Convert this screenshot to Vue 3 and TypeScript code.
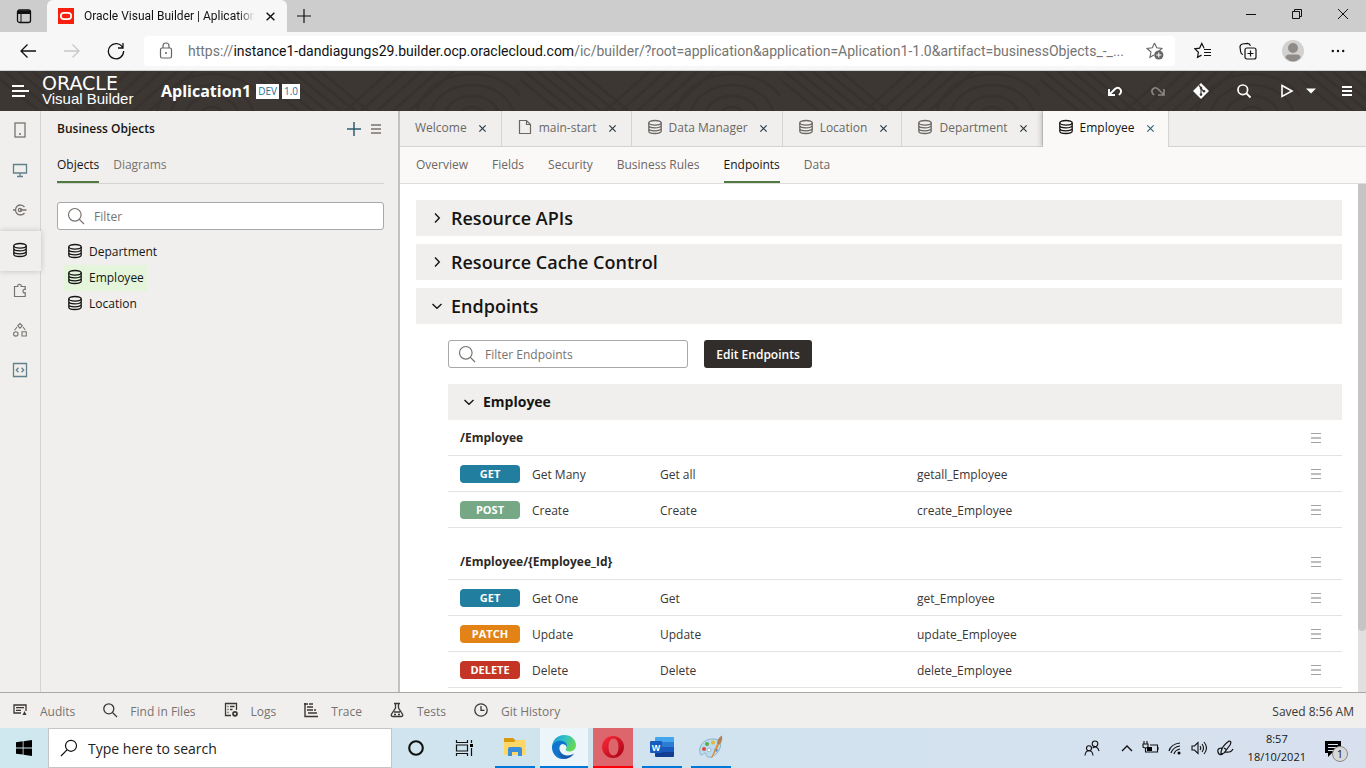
<script setup lang="ts">
import { ref } from 'vue'

interface EditorTab { label: string; icon: string }
interface Endpoint { method: string; name: string; summary: string; id: string }
interface Group { path: string; rows: Endpoint[] }

const editorTabs: EditorTab[] = [
  { label: 'Welcome', icon: '' },
  { label: 'main-start', icon: 'file' },
  { label: 'Data Manager', icon: 'db' },
  { label: 'Location', icon: 'db' },
  { label: 'Department', icon: 'db' },
  { label: 'Employee', icon: 'db' },
]
const activeEditor = ref('Employee')
const subTabs = ['Overview', 'Fields', 'Security', 'Business Rules', 'Endpoints', 'Data']
const activeSub = ref('Endpoints')
const rail = [
  { id: 'mobile', label: 'Mobile Applications' },
  { id: 'desktop', label: 'Web Applications' },
  { id: 'service', label: 'Service Connections' },
  { id: 'db', label: 'Business Objects' },
  { id: 'puzzle', label: 'Components' },
  { id: 'process', label: 'Processes' },
  { id: 'source', label: 'Source View' },
]
const activeRail = ref('db')
const objects = ['Department', 'Employee', 'Location']
const selected = ref('Employee')
const filter = ref('')
const endpointFilter = ref('')
const groups: Group[] = [
  {
    path: '/Employee',
    rows: [
      { method: 'GET', name: 'Get Many', summary: 'Get all', id: 'getall_Employee' },
      { method: 'POST', name: 'Create', summary: 'Create', id: 'create_Employee' },
    ],
  },
  {
    path: '/Employee/{Employee_Id}',
    rows: [
      { method: 'GET', name: 'Get One', summary: 'Get', id: 'get_Employee' },
      { method: 'PATCH', name: 'Update', summary: 'Update', id: 'update_Employee' },
      { method: 'DELETE', name: 'Delete', summary: 'Delete', id: 'delete_Employee' },
    ],
  },
]
const footer = [
  { label: 'Audits', icon: 'audits' },
  { label: 'Find in Files', icon: 'find' },
  { label: 'Logs', icon: 'logs' },
  { label: 'Trace', icon: 'trace' },
  { label: 'Tests', icon: 'tests' },
  { label: 'Git History', icon: 'clock' },
]
</script>

<template>
  <div class="screen">
    <svg class="defs" width="0" height="0" aria-hidden="true">
      <symbol id="db" viewBox="0 0 16 16"><g fill="none" stroke="currentColor" stroke-width="1.3"><ellipse cx="8" cy="3.8" rx="6.2" ry="2.3" /><path d="M1.8 3.8v8.4c0 1.3 2.8 2.3 6.2 2.3s6.2-1 6.2-2.3V3.8M1.8 6.6c0 1.3 2.8 2.3 6.2 2.3s6.2-1 6.2-2.3M1.8 9.5c0 1.3 2.8 2.3 6.2 2.3s6.2-1 6.2-2.3" /></g></symbol>
      <symbol id="file" viewBox="0 0 16 16"><path d="M2.5 1.5h7l4 4v9h-11zM9.5 1.5v4h4" fill="none" stroke="currentColor" stroke-width="1.2" /></symbol>
      <symbol id="mobile" viewBox="0 0 16 16"><rect x="3" y="1" width="10" height="14" fill="none" stroke="currentColor" stroke-width="1.3" /><path d="M7 12h2" stroke="currentColor" stroke-width="1.3" /></symbol>
      <symbol id="desktop" viewBox="0 0 16 16"><path d="M1.500 2.500h13v8.500h-13zM8 11v3.500M5 14.500h6" fill="none" stroke="currentColor" stroke-width="1.3" /></symbol>
      <symbol id="service" viewBox="0 0 16 16"><path d="M12.500 5A5 5 0 1 0 12.500 11M1 8h2M8 8h6.500" fill="none" stroke="currentColor" stroke-width="1.3" /><circle cx="8" cy="8" r="1.600" fill="none" stroke="currentColor" stroke-width="1.3" /></symbol>
      <symbol id="puzzle" viewBox="0 0 16 16"><path d="M2.500 4.500h3.300c-.8-3 4.200-3 3.400 0h4V7.500c-3-.8-3 4 0 3.200v3.800H2.500z" fill="none" stroke="currentColor" stroke-width="1.2" /></symbol>
      <symbol id="process" viewBox="0 0 16 16"><path d="M8 1.500l2.300 2.300L8 6.100 5.700 3.800zM10 9.700h4.300V14H10zM5 5L2.600 8.300M11 5l2.300 3" fill="none" stroke="currentColor" stroke-width="1.1" /><circle cx="3.800" cy="11.900" r="2.200" fill="none" stroke="currentColor" stroke-width="1.100" /></symbol>
      <symbol id="source" viewBox="0 0 16 16"><path d="M1.500 1.500h13v13h-13zM6.500 5.800L4.300 8l2.200 2.200M9.500 5.800L11.700 8l-2.200 2.200" fill="none" stroke="currentColor" stroke-width="1.300" /></symbol>
      <symbol id="search" viewBox="0 0 18 18"><g fill="none" stroke="currentColor" stroke-width="1.2"><circle cx="7.800" cy="7.800" r="6.300" /><path d="M12.400 12.400L17 17" /></g></symbol>
      <symbol id="find" viewBox="0 0 16 16"><g fill="none" stroke="currentColor" stroke-width="1.300"><circle cx="6.800" cy="6.800" r="5" /><path d="M10.500 10.500L15 15" /></g></symbol>
      <symbol id="audits" viewBox="0 0 16 16"><path d="M14 9V3H2v8h7M4 5.600h8M4 8.300h5" fill="none" stroke="currentColor" stroke-width="1.300" /><path d="M12.500 9l2 4h-4z" fill="currentColor" /></symbol>
      <symbol id="logs" viewBox="0 0 16 16"><path d="M13.500 8V1.500h-11v12H8M4.500 4.500h1M7 4.500h4.500M4.500 7.500h1M7 7.500h2.500M4.500 10.500h1" fill="none" stroke="currentColor" stroke-width="1.300" /><circle cx="12" cy="11.800" r="2" fill="none" stroke="currentColor" stroke-width="1.700" /></symbol>
      <symbol id="trace" viewBox="0 0 16 16"><path d="M2 1v13.500h13M1 2h4M4 5h6M4 8h6M11 8h2M5 11h9M6 2h4" fill="none" stroke="currentColor" stroke-width="1.400" /></symbol>
      <symbol id="tests" viewBox="0 0 16 16"><path d="M5 1.500h6M6.500 1.500v4.500L2.300 12.500Q2 14.500 4 14.500h8q2 0 1.700-2L9.500 6V1.500M5 10h6M5 12.500h2M9 12.500h2" fill="none" stroke="currentColor" stroke-width="1.300" /></symbol>
      <symbol id="clock" viewBox="0 0 16 16"><g fill="none" stroke="currentColor" stroke-width="1.300"><circle cx="8" cy="8" r="6.200" /><path d="M8 4v4.300h3.500" /></g></symbol>
      <symbol id="menu" viewBox="0 0 12 12"><path d="M1 1.500h10M1 10.500h10" stroke="currentColor" stroke-width="1" /><path d="M1 6h10" stroke="currentColor" stroke-width="1.400" /></symbol>
      <symbol id="x" viewBox="0 0 10 10"><path d="M1.500 1.500l7 7M8.500 1.500l-7 7" stroke="currentColor" stroke-width="1.300" /></symbol>
      <symbol id="chev" viewBox="0 0 12 12"><path d="M1.500 4L6 8.300 10.500 4" fill="none" stroke="currentColor" stroke-width="1.400" /></symbol>
    </svg>

    <!-- Browser title bar -->
    <header class="titlebar">
      <button class="tab-actions" aria-label="Tab actions">
        <svg width="16" height="16" viewBox="0 0 16 16"><rect x="1.500" y="2" width="13" height="12.500" rx="2" fill="none" stroke="#111" stroke-width="1.300" /><path d="M2 3h12v2.500H2zM5 5v9" fill="#111" stroke="#111" /></svg>
      </button>
      <div class="browser-tab">
        <svg width="16" height="16" viewBox="0 0 16 16"><path fill="#f81f0c" d="M0 0h16v16H0z" /><rect x="2.800" y="4.800" width="10.400" height="6.400" rx="3.200" fill="none" stroke="#fff" stroke-width="1.700" /></svg>
        <span class="tab-title">Oracle Visual Builder | Aplication1</span>
        <button aria-label="Close tab"><svg width="11" height="11"><use href="#x" /></svg></button>
      </div>
      <button class="new-tab" aria-label="New tab"><svg width="16" height="16" viewBox="0 0 16 16"><path d="M8 1v14M1 8h14" stroke="#111" stroke-width="1.200" /></svg></button>
      <div class="window-controls">
        <button aria-label="Minimize"><svg width="12" height="12" viewBox="0 0 12 12"><path d="M1 6.500h10" stroke="#111" /></svg></button>
        <button aria-label="Restore"><svg width="12" height="12" viewBox="0 0 12 12"><path d="M1.500 3.500h7v7h-7zM3.500 3V1.500h7v7H9" fill="none" stroke="#111" /></svg></button>
        <button aria-label="Close"><svg width="12" height="12" viewBox="0 0 12 12"><path d="M1 1l10 10M11 1L1 11" stroke="#111" /></svg></button>
      </div>
    </header>

    <!-- Browser toolbar -->
    <div class="toolbar">
      <button aria-label="Back"><svg width="18" height="16" viewBox="0 0 18 16"><path d="M17 8H2M8.500 1.500L2 8l6.500 6.500" fill="none" stroke="#111" stroke-width="1.300" /></svg></button>
      <button aria-label="Forward"><svg width="18" height="16" viewBox="0 0 18 16"><path d="M1 8h15M9.500 1.500L16 8l-6.500 6.500" fill="none" stroke="#c8c8c8" stroke-width="1.300" /></svg></button>
      <button aria-label="Reload"><svg width="18" height="18" viewBox="0 0 18 18"><path d="M15.600 5.500A7.600 7.600 0 1 0 16.600 9M16 1v5h-5" fill="none" stroke="#111" stroke-width="1.300" /></svg></button>
      <div class="address">
        <svg width="14" height="18" viewBox="0 0 14 18"><rect x="1.500" y="6" width="11" height="10" rx="1.500" fill="none" stroke="#666" stroke-width="1.200" /><path d="M4 6V4q0-3 3-3t3 3v2" fill="none" stroke="#666" stroke-width="1.200" /><circle cx="7" cy="11" r="1" fill="#666" /></svg>
        <span class="url">https://<b>instance1-dandiagungs29.builder.ocp.oraclecloud.com</b>/ic/builder/?root=application&amp;application=Aplication1-1.0&amp;artifact=businessObjects_-_...</span>
        <button aria-label="Add to favorites"><svg width="18" height="18" viewBox="0 0 18 18"><path d="M8.500 1l2.200 4.800 5.200.6-3.900 3.600M8.500 1L6.300 5.800l-5.200.6 3.900 3.600-1.100 5.300 4-2.300" fill="none" stroke="#666" stroke-width="1.100" /><circle cx="12.800" cy="13" r="4.600" fill="#666" /><path d="M12.800 10.500v5M10.300 13h5" stroke="#fff" /></svg></button>
      </div>
      <div class="browser-icons">
        <button aria-label="Favorites"><svg width="18" height="18" viewBox="0 0 18 18"><path d="M10.500 6H10L7.800 1.500 5.600 6.100l-4.700.7 3.500 3.500-.9 5 4-2.200M10 7.500h7M10 10.500h7M10 13.500h7" fill="none" stroke="#111" stroke-width="1.200" /></svg></button>
        <button aria-label="Collections"><svg width="18" height="18" viewBox="0 0 18 18"><rect x="6" y="6" width="11" height="11" rx="2" fill="none" stroke="#111" stroke-width="1.200" /><path d="M11.500 8.500v6M8.500 11.500h6M4 12.500Q1.800 12 1.600 9.500L1 5q0-2.500 2.500-3l5-.7q2 0 3 2.400" fill="none" stroke="#111" stroke-width="1.200" /></svg></button>
        <button aria-label="Profile"><svg width="22" height="22" viewBox="0 0 22 22"><circle cx="11" cy="11" r="11" fill="#d3d1cf" /><circle cx="11" cy="8" r="5" fill="#8f8b88" /><path d="M3.500 18q0-3.500 3.500-3.500h8q3.500 0 3.500 3.500Q11 25 3.500 18z" fill="#8f8b88" /></svg></button>
        <button aria-label="Settings and more"><svg width="14" height="6" viewBox="0 0 14 6"><g fill="#111"><circle cx="1.800" cy="3" r="1.200" /><circle cx="7" cy="3" r="1.200" /><circle cx="12.200" cy="3" r="1.200" /></g></svg></button>
      </div>
    </div>

    <!-- Application header -->
    <header class="app-header">
      <svg class="texture" aria-hidden="true" width="100%" height="100%">
        <defs>
          <pattern id="waves" width="260" height="41" patternUnits="userSpaceOnUse">
            <g fill="none" stroke="#342f2c" stroke-width="3">
              <path d="M-10 0l50 41M4 0l50 41M18 0l50 41M32 0l50 41M46 0l50 41M60 0l50 41" />
              <path d="M130 0L84 41M146 0l-46 41M162 0l-46 41M178 0l-46 41M194 0l-46 41" />
              <ellipse cx="212" cy="48" rx="14" ry="12" /><ellipse cx="212" cy="48" rx="28" ry="23" /><ellipse cx="212" cy="48" rx="42" ry="34" /><ellipse cx="212" cy="48" rx="56" ry="45" />
            </g>
          </pattern>
        </defs>
        <rect width="100%" height="100%" fill="url(#waves)" />
      </svg>
      <button class="nav-toggle" aria-label="Navigation"><svg width="18" height="14" viewBox="0 0 18 14"><path d="M1 2h12M1 7h17M1 12h13" stroke="#fff" stroke-width="1.800" /></svg></button>
      <div class="brand"><span class="oracle">ORACLE</span><span class="product">Visual Builder</span></div>
      <strong class="app-name">Aplication1</strong>
      <span class="chip">DEV</span><span class="chip">1.0</span>
      <div class="app-actions">
        <button aria-label="Undo"><svg width="16" height="16" viewBox="0 0 16 16"><path d="M2 6v6h6M2.500 11.500L8 6q2-2 4.300-.8 3 2 1 5.300L12 12" fill="none" stroke="#fff" stroke-width="1.900" /></svg></button>
        <button aria-label="Redo"><svg width="16" height="16" viewBox="0 0 16 16"><path d="M14 6v6H8M13.500 11.500L8 6Q6 4 3.700 5.200q-3 2-1 5.300L4 12" fill="none" stroke="#8a8683" stroke-width="1.700" /></svg></button>
        <button aria-label="Git"><svg width="16" height="16" viewBox="0 0 16 16"><path d="M8 0l8 8-8 8-8-8z" fill="#fff" /><path d="M6 2.500l2 2v8M8 5.500L11 8.500" fill="none" stroke="#3b3632" stroke-width="1.100" /><g fill="#3b3632"><circle cx="8" cy="5" r="1.300" /><circle cx="8" cy="11.500" r="1.300" /><circle cx="11" cy="8.300" r="1.300" /></g></svg></button>
        <button aria-label="Search"><svg width="16" height="16" viewBox="0 0 16 16"><circle cx="6.800" cy="6.800" r="4.800" fill="none" stroke="#fff" stroke-width="1.700" /><path d="M10.200 10.200l4.300 4.300" stroke="#fff" stroke-width="1.900" /></svg></button>
        <button aria-label="Preview"><svg width="14" height="14" viewBox="0 0 14 14"><path d="M2 1.500L12 7 2 12.500z" fill="none" stroke="#fff" stroke-width="1.600" /></svg></button>
        <button aria-label="Preview options" class="caret"><svg width="10" height="6" viewBox="0 0 10 6"><path d="M0 .5h10L5 5.500z" fill="#fff" /></svg></button>
        <button aria-label="Menu" class="last"><svg width="12" height="12" viewBox="0 0 12 12"><path d="M1 2h10M1 6h10M1 10h10" stroke="#fff" stroke-width="1.900" /></svg></button>
      </div>
    </header>

    <div class="workspace">
      <nav class="rail" aria-label="Navigator">
        <button v-for="r in rail" :key="r.id" :aria-label="r.label" :class="[r.id, { active: activeRail === r.id }]" @click="activeRail = r.id">
          <svg width="16" height="16"><use :href="'#' + r.id" /></svg>
        </button>
      </nav>

      <aside class="sidebar">
        <div class="side-head">
          <h2>Business Objects</h2>
          <button aria-label="Add"><svg width="14" height="14" viewBox="0 0 14 14"><path d="M7 0v14M0 7h14" stroke="#2e5d6e" stroke-width="1.500" /></svg></button>
          <button aria-label="Options"><svg width="10" height="10" viewBox="0 0 10 10"><path d="M0 1h10M0 5h10M0 9h10" stroke="#77736f" stroke-width="1.600" /></svg></button>
        </div>
        <div class="side-tabs"><button class="active">Objects</button><button>Diagrams</button></div>
        <label class="search wide"><svg width="18" height="18"><use href="#search" /></svg><input v-model="filter" type="text" placeholder="Filter" aria-label="Filter" /></label>
        <ul class="objects">
          <li v-for="o in objects" :key="o"><button :class="{ selected: selected === o }" @click="selected = o"><svg width="16" height="16"><use href="#db" /></svg>{{ o }}</button></li>
        </ul>
      </aside>

      <main class="editor">
        <div class="editor-tabs">
          <div v-for="t in editorTabs" :key="t.label" class="editor-tab" :class="{ active: activeEditor === t.label }">
            <button class="tab-label" @click="activeEditor = t.label"><svg v-if="t.icon" width="16" height="16"><use :href="'#' + t.icon" /></svg>{{ t.label }}</button>
            <button class="tab-close" :aria-label="'Close ' + t.label"><svg width="9" height="9"><use href="#x" /></svg></button>
          </div>
        </div>
        <div class="sub-tabs">
          <button v-for="s in subTabs" :key="s" :class="{ active: activeSub === s }" @click="activeSub = s">{{ s }}</button>
        </div>
        <div class="content">
          <div class="scroll-body">
            <h1 class="section"><button><svg class="right" width="12" height="12"><use href="#chev" /></svg>Resource APIs</button></h1>
            <h1 class="section"><button><svg class="right" width="12" height="12"><use href="#chev" /></svg>Resource Cache Control</button></h1>
            <h1 class="section"><button><svg width="12" height="12"><use href="#chev" /></svg>Endpoints</button></h1>
            <div class="endpoints">
              <div class="controls">
                <label class="search"><svg width="18" height="18"><use href="#search" /></svg><input v-model="endpointFilter" type="text" placeholder="Filter Endpoints" aria-label="Filter Endpoints" /></label>
                <button class="primary">Edit Endpoints</button>
              </div>
              <h2 class="section small"><button><svg width="12" height="12"><use href="#chev" /></svg>Employee</button></h2>
              <table v-for="g in groups" :key="g.path">
                <colgroup><col class="c-method" /><col class="c-name" /><col class="c-summary" /><col /><col class="c-menu" /></colgroup>
                <thead><tr><th colspan="4" scope="colgroup">{{ g.path }}</th><th class="menu-cell"><button :aria-label="'Actions for ' + g.path"><svg width="12" height="12"><use href="#menu" /></svg></button></th></tr></thead>
                <tbody>
                  <tr v-for="e in g.rows" :key="e.id">
                    <td><span class="badge" :class="e.method.toLowerCase()">{{ e.method }}</span></td>
                    <td>{{ e.name }}</td><td>{{ e.summary }}</td><td>{{ e.id }}</td>
                    <td class="menu-cell"><button :aria-label="'Actions for ' + e.id"><svg width="12" height="12"><use href="#menu" /></svg></button></td>
                  </tr>
                </tbody>
              </table>
            </div>
          </div>
          <div class="scrollbar"><div class="thumb"></div></div>
        </div>
      </main>
    </div>

    <footer class="status">
      <button v-for="f in footer" :key="f.label"><svg width="16" height="16"><use :href="'#' + f.icon" /></svg>{{ f.label }}</button>
      <span class="saved">Saved 8:56 AM</span>
    </footer>

    <!-- Desktop taskbar -->
    <div class="taskbar">
      <button class="start" aria-label="Start"><svg width="16" height="16" viewBox="0 0 16 16"><path d="M0 2.200l6.700-.9v6.200H0zM7.500 1.200L16 0v7.500H7.500zM0 8.400h6.700v6.200L0 13.700zM7.500 8.400H16V16l-8.500-1.200z" /></svg></button>
      <label class="os-search"><svg width="18" height="18" viewBox="0 0 18 18"><g fill="none" stroke="#111" stroke-width="1.200"><circle cx="11" cy="6.800" r="5.500" /><path d="M7 10.800L1 17" /></g></svg><input type="text" placeholder="Type here to search" aria-label="Type here to search" /></label>
      <button class="task" aria-label="Cortana"><svg width="18" height="18" viewBox="0 0 18 18"><circle cx="9" cy="9" r="6.800" fill="none" stroke="#111" stroke-width="2.100" /></svg></button>
      <button class="task" aria-label="Task view"><svg width="18" height="18" viewBox="0 0 18 18"><path d="M1.500 1v2.500h11V1M1.500 6h11v6h-11zM1.500 17v-2.500h11V17M16.500 1v3M16.500 9v8" fill="none" stroke="#111" stroke-width="1.200" /><path d="M15 5h3v3h-3z" /></svg></button>
      <button class="task app explorer" aria-label="File Explorer"><svg width="24" height="22" viewBox="0 0 24 22"><path d="M1 2h9l2 2h10v6H1z" fill="#d9980d" /><path d="M1 6h10l2-2h9.500v15H1z" fill="#ffd766" /><path d="M5 20v-7q0-2 2-2h10q2 0 2 2v7h-4v-4H9v4z" fill="#3a8fd8" /></svg></button>
      <button class="task app edge" aria-label="Microsoft Edge">
        <svg width="24" height="24" viewBox="0 0 24 24">
          <defs><linearGradient id="eg" x1="0" y1="0" x2="1" y2=".4"><stop offset="0" stop-color="#1597d8" /><stop offset=".55" stop-color="#32c2c5" /><stop offset="1" stop-color="#63d857" /></linearGradient><linearGradient id="eb" x1="0" y1="0" x2="0" y2="1"><stop offset="0" stop-color="#1c87d0" /><stop offset="1" stop-color="#1453a5" /></linearGradient></defs>
          <path d="M0 11.500C.5 5 5.500 0 12 0c7.500 0 12 5 12 10 0 4-3 6.500-6.500 6.500-3 0-4.500-1.200-3.700-2.200 1.500-2 .7-5.300-3.300-5.300C6 9 1.500 10 0 11.500z" fill="url(#eg)" />
          <path d="M0 11.500C1.500 7.500 5 5.500 9 5.700c4.500.2 6.500 3.800 5.900 6.300-.7-2-2.500-3-4.400-3-3 1-4.500 4.200-3.500 8 1 3.500 4.300 6.300 8 6.200C7 26.500-.5 20 0 11.500z" fill="#0f75cf" />
          <path d="M8.500 10c-3 4 .5 10.500 7 10.500 2.500 0 4.500-.8 6.500-2-1.700 3-4.400 4.700-7.600 5.200C9 23.500 5.500 20 6 15c.2-2.300 1-4 2.500-5z" fill="url(#eb)" />
        </svg>
      </button>
      <button class="task app opera" aria-label="Opera"><svg width="24" height="24" viewBox="0 0 24 24"><defs><linearGradient id="op" x1="0" y1="0" x2="1" y2="1"><stop offset="0" stop-color="#ff2b3a" /><stop offset="1" stop-color="#a60014" /></linearGradient></defs><path fill-rule="evenodd" fill="url(#op)" d="M12 1a11 11 0 1 0 0 22 11 11 0 1 0 0-22zM12.500 3.500c3.200 0 5 3.800 5 8.500s-1.800 8.500-5 8.500-5-3.800-5-8.500 1.800-8.500 5-8.500z" /></svg></button>
      <button class="task app word" aria-label="Word"><svg width="24" height="22" viewBox="0 0 24 22"><path d="M6 1h17q1 0 1 1v4H5V2q0-1 1-1z" fill="#42a5ee" /><path d="M5 6h19v5H5z" fill="#2b7cd3" /><path d="M5 11h19v5H5z" fill="#185abd" /><path d="M5 16h19v4q0 1-1 1H6q-1 0-1-1z" fill="#103f91" /><rect y="5" width="12" height="12" rx="1" fill="#185abd" /><text x="6" y="14.500" font-family="Liberation Sans, sans-serif" font-weight="700" font-size="9" text-anchor="middle" fill="#fff">W</text></svg></button>
      <button class="task app paint" aria-label="Paint"><svg width="24" height="24" viewBox="0 0 24 24"><path d="M2 20C-2 14 3 5 12 4c8-1 11 4 9 9-2 6-8 10-12 9-3-1-1-4-3-4-1 0-2 2-4 2z" fill="#bcdcee" stroke="#7fa6bd" stroke-width=".8" /><circle cx="5" cy="14" r="2" fill="#df4b3c" /><circle cx="8" cy="9" r="2" fill="#58ad45" /><circle cx="14" cy="7.500" r="2" fill="#e9b52c" /><circle cx="10" cy="15" r="1.800" fill="#fff" stroke="#7fa6bd" stroke-width=".7" /><circle cx="17" cy="15" r="1.800" fill="#4d8dd2" /><path d="M12 23l6-14 2 1-7 13z" fill="#e58c2d" /><path d="M18 9q0-6 5-8.500Q24 7 20 10z" fill="#b38256" /></svg></button>
      <div class="tray">
        <svg width="16" height="16" viewBox="0 0 16 16"><g fill="none" stroke="#111" stroke-width="1.100"><circle cx="11" cy="3.800" r="2.800" /><path d="M8.500 8q5-3 6.500 3" /><circle cx="5" cy="8.300" r="2.500" /><path d="M1 15.500q.5-4.700 4-4.700t4 4.700" /></g></svg>
        <svg class="up" width="12" height="8" viewBox="0 0 12 8"><path d="M1 7l5-5 5 5" fill="none" stroke="#111" stroke-width="1.400" /></svg>
        <svg width="17" height="14" viewBox="0 0 17 14"><path d="M1 3h5v3q-2.500 2-5 0zM2 0v3M5 0v3M3.500 7v4h12V4H8M16 6v3" fill="none" stroke="#111" stroke-width="1.100" /><path d="M5 6h5v4H5z" /></svg>
        <svg width="14" height="14" viewBox="0 0 14 14"><path d="M1 10Q3 3 12 2M3 12Q5 6 12 5M6 13q1-4 6-5" fill="none" stroke="#111" stroke-width="1.200" /><circle cx="11" cy="12" r="1.500" /></svg>
        <svg width="17" height="14" viewBox="0 0 17 14"><path d="M1 5v4h2.500L7 12.500v-11L3.500 5zM9 5q1.500 2 0 4M11 3q3 4 0 8M13 1q5 6 0 12" fill="none" stroke="#111" stroke-width="1.100" /></svg>
        <svg width="17" height="16" viewBox="0 0 17 16"><path d="M4 12Q5 6 12 1q3 0 1 4L7 13l-3 1zM5 8Q0 8 1 12t5 2M8 12q6 1 8-3M7 8l3 2" fill="none" stroke="#111" stroke-width="1.200" /></svg>
        <div class="clock"><span>8:57</span><span>18/10/2021</span></div>
        <div class="notify"><svg width="18" height="17" viewBox="0 0 18 17"><path d="M1 1h16v12H8l-4 4v-4H1z" /><path d="M4 4.500h10M4 7.500h10M4 10.500h6" stroke="#dce5ef" /></svg><span>1</span></div>
      </div>
    </div>
  </div>
</template>

<style>
body { margin: 0; overflow: hidden; }
</style>

<style scoped>
.screen { --ui: "Open Sans", "Noto Sans", sans-serif; --os: "Open Sans", "Noto Sans", sans-serif; height: 100vh; display: flex; flex-direction: column; font: 12px/16px var(--ui); color: #161513; background: #fff; }
.defs { position: absolute; }
* { box-sizing: border-box; }
button { border: 0; padding: 0; margin: 0; background: none; font: inherit; color: inherit; display: inline-flex; align-items: center; justify-content: center; white-space: nowrap; cursor: pointer; }
input { border: 0; outline: 0; padding: 0; background: none; font: inherit; color: inherit; min-width: 0; flex: 1; }
svg { flex: none; display: block; }

.titlebar { height: 32px; flex: none; display: flex; background: #cdcdcd; color: #111; font: 12px/16px Roboto, sans-serif; }
.tab-actions { width: 47px; }
.browser-tab { width: 240px; background: #f7f7f7; border-radius: 6px 6px 0 0; display: flex; align-items: center; padding: 0 11px; gap: 10px; }
.tab-title { flex: 1; min-width: 0; overflow: hidden; white-space: nowrap; mask-image: linear-gradient(90deg, #000 90%, transparent); }
.new-tab { width: 34px; }
.window-controls { margin-left: auto; display: flex; }
.window-controls button { width: 46px; padding-bottom: 4px; }

.toolbar { height: 39px; flex: none; display: flex; align-items: center; background: #f7f7f7; padding-left: 6px; border-bottom: 1px solid #d0d3d2; }
.toolbar > button { width: 44px; height: 32px; }
.address { flex: 1; min-width: 0; height: 30px; margin-left: 6px; background: #fff; border-radius: 4px; display: flex; align-items: center; padding: 0 11px 0 15px; gap: 15px; color: #757575; font: 14px/20px Roboto, sans-serif; }
.url { flex: 1; min-width: 0; white-space: nowrap; overflow: hidden; }
.url b { font-weight: 400; color: #111; }
.browser-icons { display: flex; padding: 0 6px 0 5px; }
.browser-icons button { width: 45px; }

.app-header { height: 40px; flex: none; position: relative; background: #3c3733; color: #fff; display: flex; align-items: center; }
.texture { position: absolute; inset: 0; opacity: .5; }
.app-header > :not(.texture) { position: relative; }
.nav-toggle { width: 40px; }
.brand { display: flex; flex-direction: column; margin-left: 2px; width: 94px; }
.oracle { font: 19px/16px "DejaVu Sans", sans-serif; }
.product { font: 15px/16px "Liberation Sans", sans-serif; }
.app-name { margin: 0 5px 0 25px; font-size: 16px; line-height: 20px; }
.chip { background: #fff; color: #2a6f95; font-size: 10px; line-height: 15px; padding: 0 2px; margin-right: 3px; }
.app-actions { margin-left: auto; display: flex; align-items: center; padding-right: 10px; }
.app-actions button { width: 43px; height: 32px; }
.app-actions .caret { width: 10px; margin: 0 22px 0 -2px; }
.app-actions .last { width: 18px; }

.workspace { flex: 1; min-height: 0; display: flex; background: #f0efed; }
.rail { width: 41px; flex: none; border-right: 1px solid #d6d4d2; display: flex; flex-direction: column; color: #77736f; }
.rail button { height: 40px; padding-bottom: 2px; }
.rail .desktop, .rail .source { color: #62808b; }
.rail .active { color: #161513; box-shadow: 0 0 6px rgba(0, 0, 0, .2); margin-right: -1px; padding-right: 1px; background: #f0efed; }
.sidebar { width: 359px; flex: none; border-right: 2px solid #c4c2c0; padding: 0 14px 0 16px; }
.side-head { height: 36px; display: flex; align-items: center; gap: 10px; padding-right: 3px; }
.side-head h2 { margin: 0 auto 0 0; font-size: 12px; line-height: 16px; font-weight: 600; }
.side-tabs { height: 37px; display: flex; gap: 14px; border-bottom: 1px solid #d6d4d2; color: #77736f; }
.side-tabs button, .sub-tabs button { border-bottom: 2px solid transparent; padding-top: 2px; }
.side-tabs .active, .sub-tabs .active { color: #161513; border-color: #4f7a43; }
.search { height: 28px; width: 240px; border: 1px solid #aaa8a6; border-radius: 3px; background: #fff; display: flex; align-items: center; padding: 0 9px; gap: 9px; color: #77736f; }
.search input { padding-top: 2px; }
.search.wide { width: auto; margin-top: 18px; }
input::placeholder { color: #77736f; opacity: 1; }
.objects { list-style: none; margin: 9px 0 0; padding: 0 0 0 7px; }
.objects li { height: 26px; display: flex; }
.objects button { gap: 6px; padding: 0 3px; }
.objects svg { margin-bottom: 3px; }
.objects .selected { background: #e4f5dc; }

.editor { flex: 1; min-width: 0; display: flex; flex-direction: column; }
.editor-tabs { height: 36px; flex: none; display: flex; box-shadow: inset 0 -1px #d6d4d2; color: #6b6763; }
.editor-tab { display: flex; padding: 0 12px 2px 15px; gap: 10px; border-right: 1px solid #d6d4d2; }
.tab-label { gap: 6px; }
.tab-label svg { margin-bottom: 2px; }
.tab-close { width: 12px; color: #2d3b45; }
.editor-tab.active { background: #fbf9f8; color: #161513; box-shadow: -2px 0 5px rgba(0, 0, 0, .2); clip-path: inset(0 0 0 -8px); }
.active .tab-close { color: #35657a; }
.sub-tabs { height: 37px; flex: none; display: flex; gap: 24px; padding: 0 16px; background: #fbf9f8; border-bottom: 1px solid #dfdddb; color: #6b6763; }
.content { flex: 1; min-height: 0; display: flex; background: #fff; overflow: hidden; }
.scroll-body { flex: 1; min-width: 0; padding: 16px; overflow: hidden; }
.scrollbar { width: 8px; background: #e1e0de; }
.thumb { height: 88%; background: #c6c5c3; border-radius: 0 0 4px 4px; }
.section { margin: 0 0 8px; height: 36px; background: #f0efed; display: flex; font-size: 18px; line-height: 24px; font-weight: 600; }
.section button { flex: 1; justify-content: flex-start; gap: 8px; padding-left: 15px; }
.right { transform: rotate(-90deg); }
.section.small { font-size: 14px; line-height: 20px; font-weight: 700; margin: 0; }
.endpoints { padding: 8px 0 0 32px; }
.controls { display: flex; gap: 16px; margin-bottom: 16px; }
.primary { background: #312d2a; color: #fff; border-radius: 3px; font-weight: 600; width: 108px; padding-top: 2px; }
table { width: 100%; border-collapse: separate; border-spacing: 0; table-layout: fixed; margin-bottom: 16px; }
.c-method { width: 84px; }
.c-name { width: 128px; }
.c-summary { width: 257px; }
.c-menu { width: 52px; }
th, td { height: 36px; padding: 2px 0 0; text-align: left; border-bottom: 1px solid #e4e3e1; font-weight: 400; color: #3a3734; }
th { padding: 0 0 0 12px; font-weight: 700; color: #2b2926; }
td:first-child { padding: 0 0 0 12px; }
th.menu-cell, td.menu-cell { padding: 0; color: #a5a3a0; }
.menu-cell button { display: flex; width: 100%; height: 32px; }
.badge { display: block; width: 60px; height: 18px; border-radius: 4px; color: #fff; font-size: 11px; line-height: 18px; font-weight: 700; text-align: center; }
.get { background: #227e9e; }
.post { background: #76a886; }
.patch { background: #e38316; }
.delete { background: #c53525; }

.status { height: 36px; flex: none; background: #f0efed; border-top: 1px solid #aaa8a6; display: flex; align-items: center; gap: 27px; padding: 2px 12px 0; color: #77736f; }
.status button { gap: 12px; }
.status svg { color: #3a3734; margin-bottom: 3px; }
.saved { margin-left: auto; color: #3a3734; }

.taskbar { height: 40px; flex: none; display: flex; background: linear-gradient(90deg, #cfe7ee, #d0e3ee 50%, #d8e0ee); font-family: var(--os); }
.start { width: 48px; }
.os-search { width: 344px; background: #fff; border: 1px solid #c5c5c5; display: flex; align-items: center; padding: 0 11px; gap: 10px; font-size: 14px; line-height: 20px; color: #111; }
.os-search input { padding-top: 2px; }
.os-search input::placeholder { color: #222; }
.task { width: 48px; }
.task.app { width: 40px; margin: 0 5px 0 4px; border-bottom: 2px solid #0078d7; }
.task.explorer { margin-left: 7px; }
.task.app.edge { width: 48px; margin: 0 5px 0 0; background: #ecf5f9; }
.task.app.opera { margin: 0 9px 0 0; background: #dd666c; border-color: #fb0007; }
.task.app.word { margin: 0 9px 0 0; }
.task.app.paint { margin: 0; }
.tray { margin-left: auto; display: flex; align-items: center; gap: 9px; padding-right: 16px; }
.up { margin-left: 12px; }
.clock { display: flex; flex-direction: column; align-items: center; font-size: 11px; line-height: 18px; margin-left: 5px; }
.notify { position: relative; width: 26px; margin-left: 9px; }
.notify span { position: absolute; left: 8px; top: 6px; width: 16px; height: 16px; border-radius: 50%; background: #d8d8d8; border: 1px solid #888; font-size: 11px; line-height: 14px; text-align: center; }
</style>
